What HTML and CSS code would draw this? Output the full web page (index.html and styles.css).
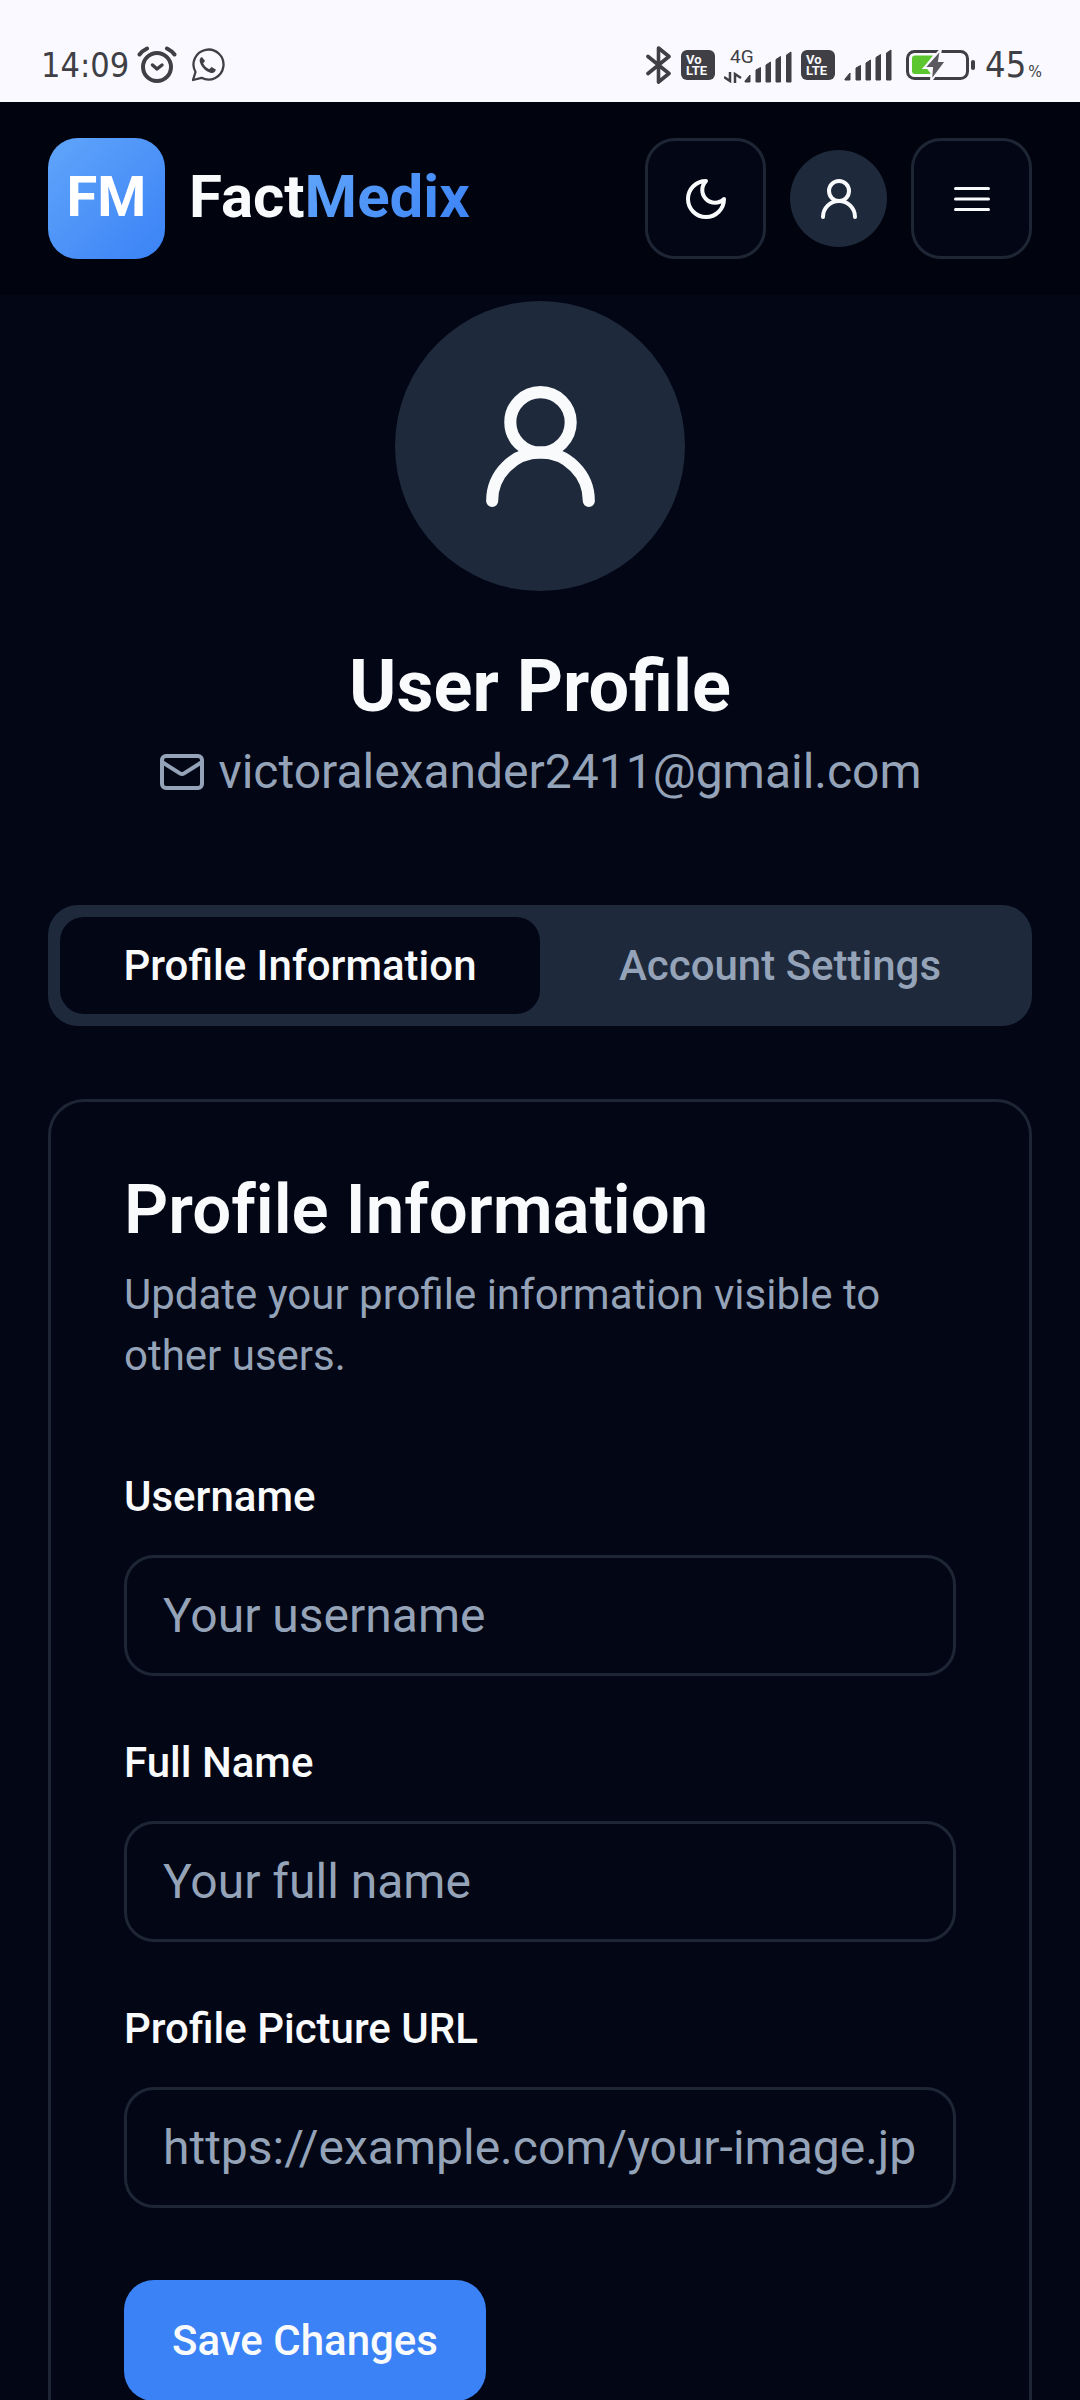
FILE: index.html
```html
<!DOCTYPE html>
<html lang="en">
<head>
<meta charset="utf-8">
<meta name="viewport" content="width=device-width, initial-scale=1">
<title>FactMedix – User Profile</title>
<link rel="stylesheet" href="styles.css">
</head>
<body>
<div class="status">
  <div class="status-left">
    <span class="clock">14:09</span>
    <svg class="alarm" width="40" height="38" viewBox="0 0 40 38" fill="none" stroke="currentColor" stroke-linecap="round" stroke-linejoin="round">
      <circle cx="20" cy="21" r="14" stroke-width="4"/>
      <path d="M2.500 8.500Q5 5 10 2.500M37.500 8.500Q35 5 30 2.500" stroke-width="4"/>
      <path d="M15.500 19l4.500 4 5-4" stroke-width="3.500"/>
    </svg>
    <svg width="34" height="34" viewBox="0 0 34 34">
      <path d="M2 32l2.500-8A15 15 0 1 1 10.500 29.800z" fill="none" stroke="currentColor" stroke-width="2.300" stroke-linejoin="round"/>
      <path d="M11 9c-2 .8-3 3-2 5.500 2 5.500 6 9 11 10.500 2.500.5 4.500-1 4.800-3.500L20.500 19l-2.300 2.200c-3-1.400-4.700-3.200-6-6L14 13z" fill="currentColor"/>
    </svg>
  </div>
  <div class="status-right">
    <svg width="26" height="38" viewBox="0 0 26 38" fill="none" stroke="currentColor" stroke-width="3.600" stroke-linejoin="round" stroke-linecap="round"><path d="M2 10.500l21 17L12.500 36V2L23 10.500l-21 17"/></svg>
    <span class="volte"><span>Vo</span><span>LTE</span></span>
    <span class="signal">
      <span class="net"><span>4G</span>
        <svg width="18" height="12" viewBox="0 0 18 12" fill="none" stroke="currentColor" stroke-width="2.500"><path d="M0 6l6 4V1M11 12V3l6 4"/></svg>
      </span>
      <svg class="bars" width="48" height="32" viewBox="0 0 48 32" fill="currentColor" stroke="currentColor" stroke-width="1" stroke-linejoin="round"><path d="M1 30l5-6v7H1zM12 19l4.500-2.500V31H12zM22 14l4.500-3V31H22zM32 8.500l4.500-3V31H32zM42.500 4L47 1v30h-4.500z"/></svg>
    </span>
    <span class="volte">
      <span>Vo</span><span>LTE</span>
    </span>
    <svg class="bars" width="48" height="32" viewBox="0 0 48 32" fill="currentColor" stroke="currentColor" stroke-width="1" stroke-linejoin="round"><path d="M1 30l5-6v7H1zM12 19l4.500-2.500V31H12zM22 14l4.500-3V31H22zM32 8.500l4.500-3V31H32zM42.500 4L47 1v30h-4.500z"/></svg>
    <svg class="battery" width="70" height="32" viewBox="0 0 70 32">
      <rect x="1.500" y="2.500" width="60" height="27" rx="7" fill="none" stroke="currentColor" stroke-width="3"/>
      <path d="M9 6.500h18L19 17l6 8H9a3 3 0 0 1-3-3V9.500a3 3 0 0 1 3-3z" fill="#5cc62f"/>
      <path d="M35 0L18 19h8l-1 13 15-20h-7z" fill="#5b595f" stroke="#f9f9ff" stroke-width="2"/>
      <rect x="65" y="11" width="4" height="10" rx="2" fill="currentColor"/>
    </svg>
    <span class="clock clock-large">45<span class="percent">%</span></span>
  </div>
</div>

<header class="header">
  <a class="brand" href="#">
    <span class="logo">FM</span>
    <span class="name">Fact<span class="name-accent">Medix</span></span>
  </a>
  <div class="actions">
    <button class="square" type="button" aria-label="Toggle theme">
      <svg class="icon" viewBox="0 0 24 24"><path d="M12 3a6 6 0 0 0 9 9 9 9 0 1 1-9-9Z"/></svg>
    </button>
    <button class="round" type="button" aria-label="Account">
      <svg class="icon" viewBox="0 0 24 24"><circle cx="12" cy="8" r="5"/><path d="M20 21a8 8 0 0 0-16 0"/></svg>
    </button>
    <button class="square" type="button" aria-label="Menu">
      <svg class="icon" viewBox="0 0 24 24"><path stroke-width="1.500" d="M3.750 6.750h16.500M3.750 12h16.500M3.750 17.250h16.500"/></svg>
    </button>
  </div>
</header>

<main class="main">
  <section class="profile">
    <div class="avatar"><svg class="icon icon-large" viewBox="0 0 24 24"><circle cx="12" cy="8" r="5"/><path d="M20 21a8 8 0 0 0-16 0"/></svg></div>
    <h1 class="title">User Profile</h1>
    <p class="email">
      <svg class="icon" viewBox="0 0 24 24"><rect x="2" y="4" width="20" height="16" rx="2"/><path d="m22 7-8.970 5.700a1.940 1.940 0 0 1-2.060 0L2 7"/></svg>
      <span>victoralexander2411@gmail.com</span>
    </p>
  </section>

  <div class="tabs" role="tablist">
    <button class="tab tab-active" type="button" role="tab" aria-selected="true">Profile Information</button>
    <button class="tab" type="button" role="tab" aria-selected="false">Account Settings</button>
  </div>

  <section class="card">
    <h2 class="card-title">Profile Information</h2>
    <p class="card-text">Update your profile information visible to other users.</p>
    <form class="form">
      <div class="fields">
        <div class="field">
          <label for="username">Username</label>
          <input id="username" type="text" placeholder="Your username">
        </div>
        <div class="field">
          <label for="fullname">Full Name</label>
          <input id="fullname" type="text" placeholder="Your full name">
        </div>
        <div class="field">
          <label for="picture">Profile Picture URL</label>
          <input id="picture" type="url" placeholder="https://example.com/your-image.jpg">
        </div>
      </div>
      <button class="save" type="button">Save Changes</button>
    </form>
  </section>
</main>
</body>
</html>
```
FILE: styles.css
```css
:root {
  --bg: #020615;
  --header: #01040e;
  --muted: #1e293b;
  --line: #1e2635;
  --text: #f8fafc;
  --text-muted: #94a3b8;
  --primary: #3b82f6;
}

* { box-sizing: border-box; }

body {
  margin: 0;
  height: 100vh;
  display: flex;
  flex-direction: column;
  overflow: hidden;
  background: var(--bg);
  color: var(--text);
  font-family: Roboto, "Liberation Sans", sans-serif;
}

h1, h2, p { margin: 0; }

button, input { font: inherit; color: inherit; }

button { padding: 0; border: 0; cursor: pointer; }

.icon {
  display: block;
  width: 48px;
  height: 48px;
  flex: none;
  fill: none;
  stroke: currentColor;
  stroke-width: 2;
  stroke-linecap: round;
  stroke-linejoin: round;
}

.icon-large { width: 145px; height: 145px; }

/* System status bar */
.status {
  flex: none;
  height: 102px;
  padding: 27px 38px 0 41px;
  display: flex;
  justify-content: space-between;
  align-items: center;
  background: #f9f9ff;
  color: #403f45;
}

.status-left, .status-right { display: flex; align-items: center; }
.status-left { gap: 14px; }
.status-right { gap: 9px; }

.clock {
  font-family: "DejaVu Sans Condensed", "DejaVu Sans", sans-serif;
  font-size: 34px;
  line-height: 40px;
}

.clock-large { font-size: 36px; }
.alarm { margin-left: -6px; }
.percent { margin-left: 2px; font-size: 16px; line-height: 16px; }

.volte {
  width: 34px;
  height: 30px;
  padding: 4px 0 0 5px;
  border-radius: 6px;
  background: #403f45;
  color: #f9f9ff;
  font-size: 13px;
  font-weight: 700;
  line-height: 11px;
}

.volte span { display: block; }
.bars { display: block; }
.signal { display: flex; align-items: flex-end; }

.net {
  width: 20px;
  height: 36px;
  display: flex;
  flex-direction: column;
  justify-content: space-between;
  font-size: 19px;
  line-height: 20px;
}

.net span { padding-left: 6px; }

.battery { margin-left: 5px; }

/* App header */
.header {
  flex: none;
  height: 193px;
  padding: 0 48px;
  display: flex;
  align-items: center;
  justify-content: space-between;
  background: var(--header);
}

.brand {
  display: flex;
  align-items: center;
  gap: 24px;
  color: inherit;
  text-decoration: none;
  font-size: 60px;
  font-weight: 700;
}

.logo {
  width: 117px;
  height: 121px;
  padding-bottom: 4px;
  display: grid;
  place-items: center;
  border-radius: 30px;
  background: linear-gradient(135deg, #60a5fa, #3b82f6);
  color: #fff;
  font-size: 56px;
}

.name { padding-bottom: 4px; }

.name-accent {
  background: linear-gradient(135deg, #60a5fa, #3b82f6);
  background-clip: text;
  -webkit-background-clip: text;
  color: transparent;
}

.actions { display: flex; align-items: center; gap: 24px; }

.square, .round { display: grid; place-items: center; }

.square {
  width: 121px;
  height: 121px;
  border: 3px solid var(--line);
  border-radius: 30px;
  background: var(--bg);
}

.round {
  width: 97px;
  height: 97px;
  border-radius: 50%;
  background: var(--muted);
}

/* Page content */
.main {
  flex: 1;
  min-height: 0;
  padding: 6px 48px 48px;
  overflow-y: auto;
  scrollbar-width: none;
}

.profile {
  display: flex;
  flex-direction: column;
  align-items: center;
}

.avatar {
  width: 290px;
  height: 290px;
  margin-bottom: 48px;
  display: grid;
  place-items: center;
  border-radius: 50%;
  background: var(--muted);
}

.title { font-size: 72px; font-weight: 700; line-height: 96px; }

.email {
  display: flex;
  align-items: center;
  gap: 12px;
  color: var(--text-muted);
  font-size: 48px;
  line-height: 73px;
}

.tabs {
  margin: 97px 0 73px;
  padding: 12px;
  display: grid;
  grid-template-columns: 1fr 1fr;
  border-radius: 30px;
  background: var(--muted);
}

.tab {
  height: 97px;
  border-radius: 24px;
  background: transparent;
  color: var(--text-muted);
  font-size: 42px;
  font-weight: 500;
}

.tab-active { background: var(--bg); color: var(--text); }

.card {
  padding: 72px 73px;
  border: 3px solid var(--line);
  border-radius: 36px;
}

.card-title {
  margin-bottom: 18px;
  font-size: 69px;
  font-weight: 600;
  line-height: 72px;
  font-variant-ligatures: none;
}

.card-text {
  margin-bottom: 72px;
  color: var(--text-muted);
  font-size: 42px;
  line-height: 61px;
}

.form, .fields, .field { display: flex; flex-direction: column; }
.form { gap: 72px; }
.fields { gap: 48px; }
.field { gap: 20px; }

.field label { font-size: 42px; font-weight: 500; line-height: 77px; }

.field input {
  width: 100%;
  height: 121px;
  padding: 0 36px;
  border: 3px solid var(--line);
  border-radius: 30px;
  background: var(--bg);
  font-size: 48px;
}

.field input::placeholder { color: var(--text-muted); opacity: 1; }

.save {
  align-self: flex-start;
  height: 121px;
  padding: 0 48px;
  border-radius: 30px;
  background: var(--primary);
  font-size: 42px;
  font-weight: 500;
}
```
